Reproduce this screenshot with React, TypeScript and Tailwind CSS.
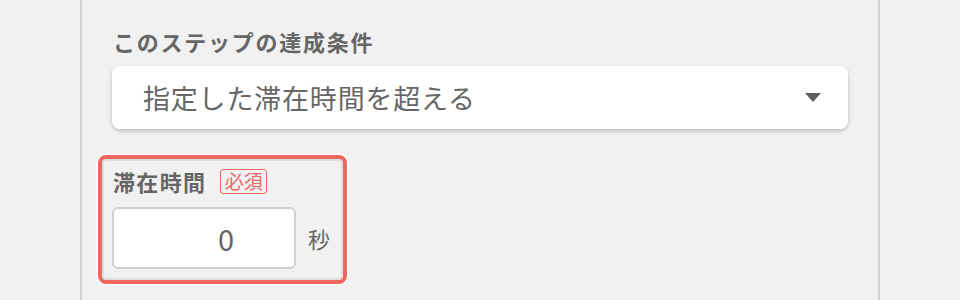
import React from "react";

export default function App() {
  return (
    <div
      className="w-[960px] h-[300px] bg-[#f1f1f1] overflow-hidden"
      style={{ fontFamily: '"Noto Sans CJK JP", "Noto Sans", sans-serif' }}
    >
      <div className="ml-[80px] w-[800px] h-full border-x-2 border-[#d2d2d2] px-[30px] pt-[26px]">
        <div className="text-[22px] leading-[30px] font-bold text-[#666666] tracking-[0.08em] ml-[1px]">
          このステップの達成条件
        </div>
        <div className="mt-[10px] h-[63px] bg-white rounded-[8px] shadow-[0_2px_4px_rgba(0,0,0,0.22)] flex items-center pl-[31px] pr-[27px]">
          <span className="flex-1 text-[27px] leading-[34px] text-[#666666] tracking-[0.03em]">
            指定した滞在時間を超える
          </span>
          <svg width="16" height="9" viewBox="0 0 16 9" className="block">
            <path d="M0 0 H16 L8 9 Z" fill="#5e5e5e" />
          </svg>
        </div>
        <div className="mt-[26px] -ml-[14px] w-[249px] h-[129px] border-[4px] border-[#f0675f] rounded-[8px] shadow-[0_0_0_1.5px_#ffffff,inset_0_0_0_2px_rgba(0,0,0,0.08)] pl-[10px] pr-[13px] pt-[8px]">
          <div className="flex items-center h-[28px]">
            <span className="ml-[1px] text-[22px] leading-[28px] font-bold text-[#666666] tracking-[0.06em]">
              滞在時間
            </span>
            <span className="ml-[14px] h-[25px] w-[47px] border-[1.5px] border-[#f0675f] rounded-[3px] text-[#f0675f] text-[19px] leading-[22px] flex items-center justify-center">
              必須
            </span>
          </div>
          <div className="mt-[12px] flex items-center">
            <div className="w-[184px] h-[62px] bg-white border-2 border-[#cfcfcf] rounded-[6px] flex items-center justify-end pr-[60px]">
              <span className="text-[29px] leading-[34px] text-[#666666]">0</span>
            </div>
            <span className="ml-[12px] text-[22px] leading-[28px] text-[#666666]">秒</span>
          </div>
        </div>
      </div>
    </div>
  );
}
